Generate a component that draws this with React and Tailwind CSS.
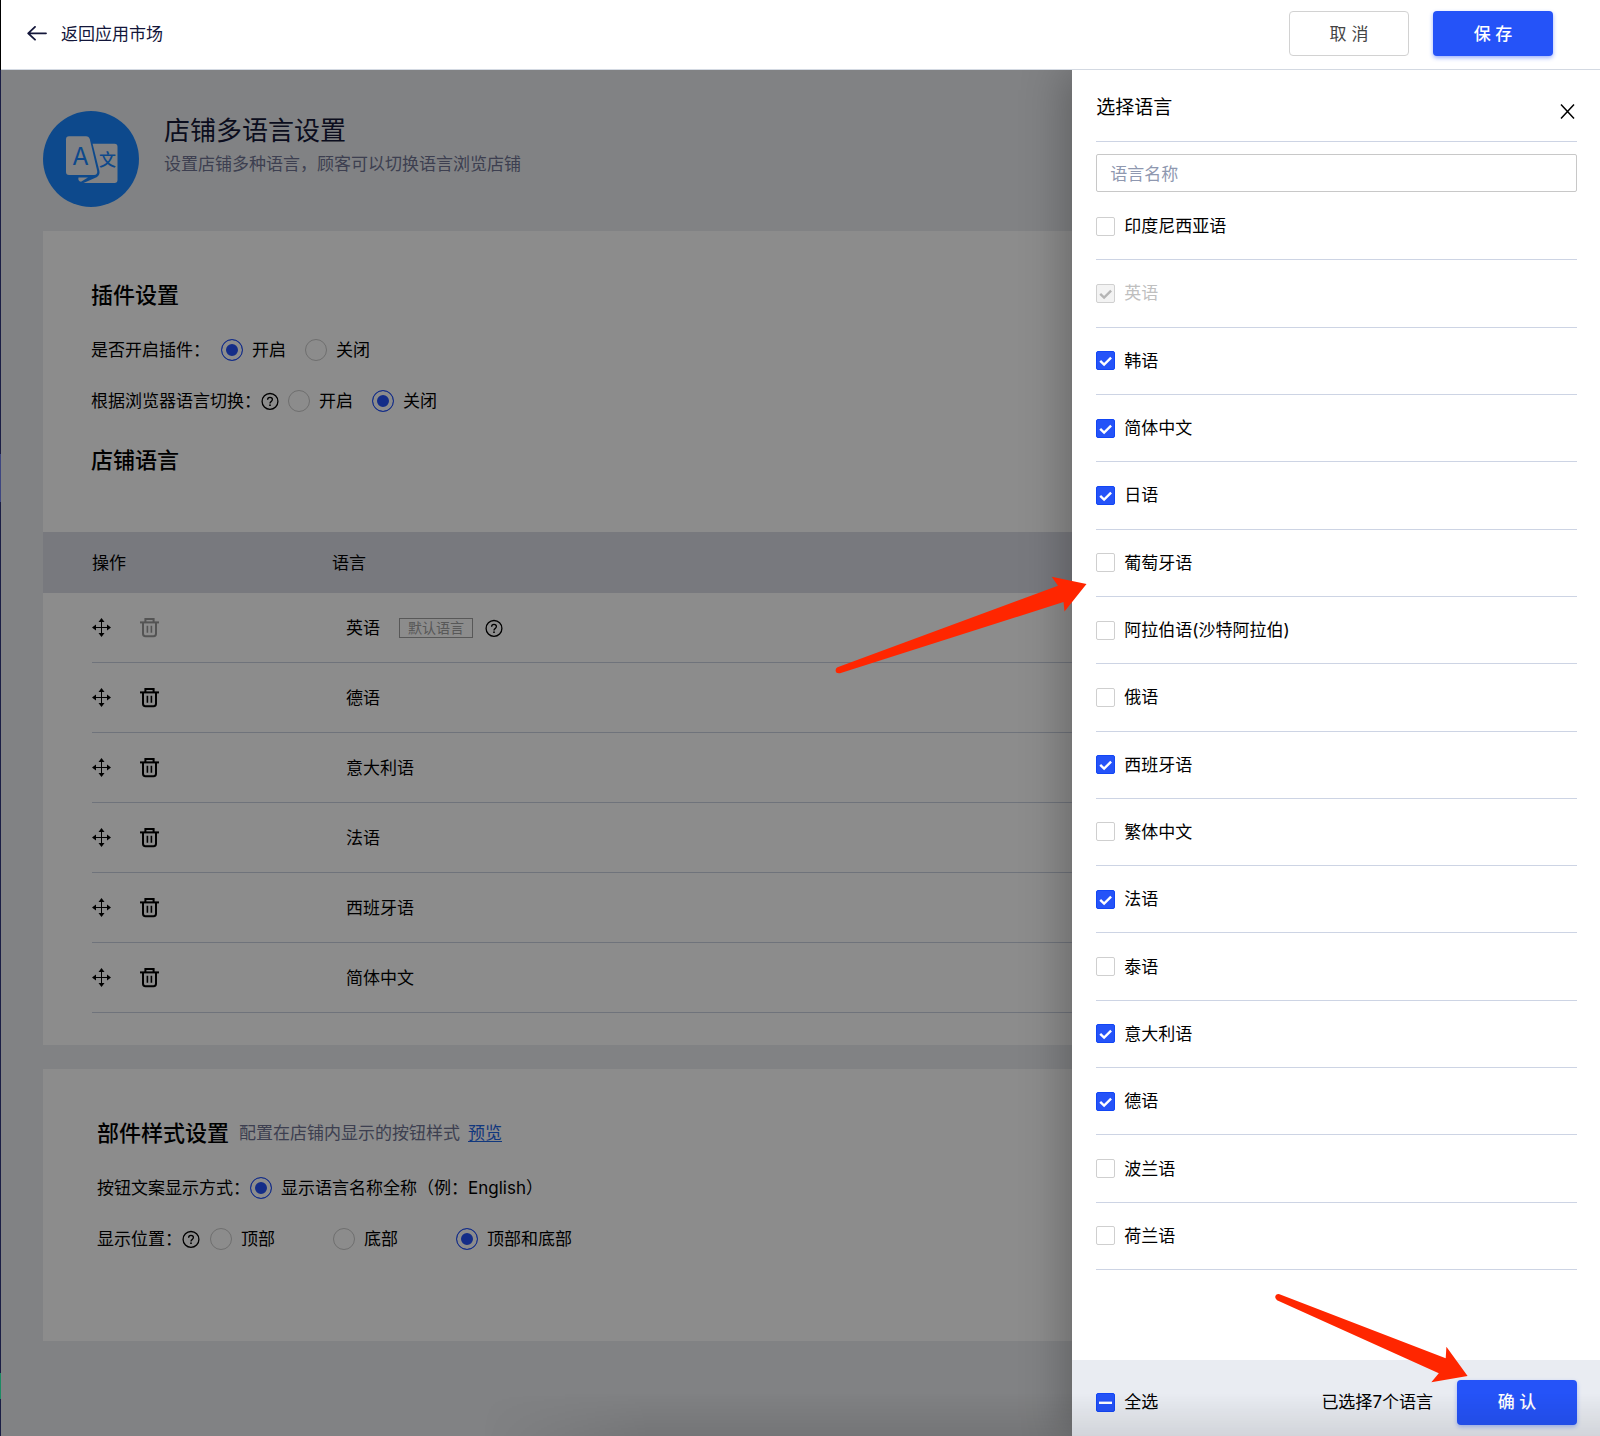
import { useState } from "react";
import clsx from "clsx";

const LANGUAGES = [
  { id: "id", name: "印度尼西亚语" },
  { id: "en", name: "英语", locked: true },
  { id: "ko", name: "韩语" },
  { id: "zh-cn", name: "简体中文" },
  { id: "ja", name: "日语" },
  { id: "pt", name: "葡萄牙语" },
  { id: "ar", name: "阿拉伯语(沙特阿拉伯)" },
  { id: "ru", name: "俄语" },
  { id: "es", name: "西班牙语" },
  { id: "zh-tw", name: "繁体中文" },
  { id: "fr", name: "法语" },
  { id: "th", name: "泰语" },
  { id: "it", name: "意大利语" },
  { id: "de", name: "德语" },
  { id: "pl", name: "波兰语" },
  { id: "nl", name: "荷兰语" },
];

const SHOP_LANGUAGES = [
  { name: "英语", isDefault: true },
  { name: "德语" },
  { name: "意大利语" },
  { name: "法语" },
  { name: "西班牙语" },
  { name: "简体中文" },
];

const BackIcon = () => (
  <svg width="20" height="16" viewBox="0 0 20 16" fill="none" stroke="currentColor" strokeWidth="1.8" strokeLinecap="round" strokeLinejoin="round">
    <path d="M8 .9 1.2 7.3 8 13.7M1.5 7.3H19" />
  </svg>
);

const HelpIcon = () => (
  <svg className="shrink-0" width="18" height="18" viewBox="0 0 18 18" fill="none" stroke="currentColor" strokeWidth="1.3">
    <circle cx="9" cy="9.4" r="7.9" />
    <path d="M6.6 7.8C6.6 6.3 7.6 5.4 9 5.4s2.4.9 2.4 2.2c0 1-.6 1.5-1.3 2-.7.5-1.1.9-1.1 1.8" />
    <circle cx="9" cy="13.2" r="0.9" fill="currentColor" stroke="none" />
  </svg>
);

const MoveIcon = () => (
  <svg width="19" height="19" viewBox="0 0 19 19" fill="currentColor">
    <path d="M9 3h1v13H9z" />
    <path d="M3 9h13v1H3z" />
    <path d="M9.5 0 12.5 4H6.5zM9.5 19l-3-4h6zM0 9.5l4-3v6zM19 9.5l-4 3v-6z" />
  </svg>
);

const TrashIcon = () => (
  <svg width="19" height="20" viewBox="0 0 19 20" fill="none" stroke="currentColor" strokeWidth="2">
    <path d="M0 4.4h19" />
    <path d="M5.4 4.4V1h8.2v3.4" />
    <path d="M3 4.4v11.4q0 2.4 2.4 2.4h8.2q2.4 0 2.4-2.4V4.4" />
    <path d="M7.4 7.8v7M11.4 7.8v7" strokeWidth="1.6" />
  </svg>
);

const AppLogo = () => (
  <svg className="shrink-0" width="96" height="96" viewBox="0 0 96 96">
    <circle cx="48" cy="48" r="48" fill="#1986ff" />
    <g fill="#ebedf1">
      <path d="M26 25.3H43Q46 25.3 46.8 28.3L54.2 60Q54.6 64 51 64H26Q23 64 23 61V28.3Q23 25.3 26 25.3Z" />
      <path d="M49.6 32.7H71.5Q74.5 32.7 74.5 35.7V69Q74.5 72 71.5 72H40.5L53.6 66.2Q57.2 64 56.4 60Z" />
      <path d="M35.5 66.5H45L38 70.8Q34.6 70 35.5 66.5Z" />
    </g>
    <g fill="#1986ff" fontFamily="Inter, 'Noto Sans CJK SC', sans-serif">
      <text x="37.5" y="53.5" fontSize="24" textAnchor="middle">A</text>
      <text x="64.5" y="55" fontSize="17" fontWeight="500" textAnchor="middle">文</text>
    </g>
  </svg>
);

const Radio = ({ name, label, checked, onChange }) => (
  <label className="flex items-center gap-[9px]">
    <input
      type="radio"
      name={name}
      checked={checked}
      onChange={onChange}
      className="size-[22px] shrink-0 appearance-none rounded-full border border-[#c9c9c9] bg-white checked:border-[#2553f8] checked:bg-[#2553f8] checked:shadow-[inset_0_0_0_4px_white]"
    />
    {label}
  </label>
);

const Checkbox = ({ label, checked, partial, disabled, onChange }) => (
  <label className={clsx("flex items-center gap-[9px]", disabled && "text-[#bfbfbf]")}>
    <span className="grid shrink-0 place-items-center">
      <input
        type="checkbox"
        checked={checked}
        disabled={disabled}
        onChange={onChange}
        className={clsx(
          "col-start-1 row-start-1 size-[19px] appearance-none rounded-xs border",
          disabled
            ? "border-[#d0d0d0] bg-[#f3f3f3]"
            : checked || partial
              ? "border-[#1246f5] bg-[#2553f8]"
              : "border-[#cfcfcf] bg-white"
        )}
      />
      {(checked || partial) && (
        <svg
          className={clsx(
            "pointer-events-none col-start-1 row-start-1",
            disabled ? "text-[#b5b5b5]" : "text-white"
          )}
          width="19"
          height="19"
          viewBox="0 0 19 19"
          fill="none"
          stroke="currentColor"
          strokeWidth="2.4"
        >
          <path d={partial ? "M3 9.8h13" : "M4.2 9.8l3.9 3.8 7-7"} />
        </svg>
      )}
    </span>
    {label}
  </label>
);

const SettingsPage = () => {
  const [enabled, setEnabled] = useState("on");
  const [followBrowser, setFollowBrowser] = useState("off");
  const [position, setPosition] = useState("both");

  return (
    <main className="px-[42px] pt-[41px] pb-24">
      <div className="mb-6 flex gap-[25px]">
        <AppLogo />
        <div>
          <h1 className="text-[26px] leading-[39px] text-[#151838]">店铺多语言设置</h1>
          <p className="leading-7 text-[#6f7492]">设置店铺多种语言，顾客可以切换语言浏览店铺</p>
        </div>
      </div>

      <section className="mb-6 bg-white pt-[49px] pb-8">
        <div className="px-12">
          <h2 className="mb-[29px] text-[22px] leading-[30px] font-medium">插件设置</h2>
          <div className="mb-[29px] flex h-[22px] items-center">
            <span className="mr-[11px]">是否开启插件：</span>
            <div className="flex gap-[19px]">
              <Radio name="enabled" label="开启" checked={enabled === "on"} onChange={() => setEnabled("on")} />
              <Radio name="enabled" label="关闭" checked={enabled === "off"} onChange={() => setEnabled("off")} />
            </div>
          </div>
          <div className="mb-[33px] flex h-[22px] items-center">
            <span>根据浏览器语言切换：</span>
            <HelpIcon />
            <div className="ml-[9px] flex gap-[19px]">
              <Radio name="browser" label="开启" checked={followBrowser === "on"} onChange={() => setFollowBrowser("on")} />
              <Radio name="browser" label="关闭" checked={followBrowser === "off"} onChange={() => setFollowBrowser("off")} />
            </div>
          </div>
          <h2 className="mb-[57px] text-[22px] leading-[30px] font-medium">店铺语言</h2>
        </div>

        <table className="w-full table-fixed border-collapse text-left">
          <thead className="bg-[#dadce6]">
            <tr className="h-[61px]">
              <th className="w-[289px] pl-[49px] font-normal">操作</th>
              <th className="font-normal">语言</th>
            </tr>
          </thead>
          <tbody>
            {SHOP_LANGUAGES.map((lang) => (
              <tr key={lang.name}>
                <td className="p-0 pl-[49px]">
                  <div className="flex h-[70px] items-center gap-[29px] border-b border-[#cbd1e0]">
                    <button type="button" aria-label="拖动排序">
                      <MoveIcon />
                    </button>
                    <button
                      type="button"
                      aria-label="删除"
                      disabled={lang.isDefault}
                      className="disabled:text-[#999]"
                    >
                      <TrashIcon />
                    </button>
                  </div>
                </td>
                <td className="p-0 pr-12">
                  <div className="flex h-[70px] items-center border-b border-[#cbd1e0] pl-3.5">
                    {lang.name}
                    {lang.isDefault && (
                      <>
                        <span className="mr-3 ml-[19px] border border-[#a0a0a0] px-2 text-sm leading-[18px] text-[#a0a0a0]">
                          默认语言
                        </span>
                        <HelpIcon />
                      </>
                    )}
                  </div>
                </td>
              </tr>
            ))}
          </tbody>
        </table>
      </section>

      <section className="bg-white px-[54px] pt-[49px] pb-[91px]">
        <div className="mb-[29px] flex items-center">
          <h2 className="mr-2.5 text-[22px] leading-[30px] font-medium">部件样式设置</h2>
          <p className="mr-2 text-[#6f7492]">配置在店铺内显示的按钮样式</p>
          <a href="#preview" className="text-[#1f66e5] underline underline-offset-2">预览</a>
        </div>
        <div className="mb-[29px] flex h-[22px] items-center">
          <span>按钮文案显示方式：</span>
          <Radio name="text-mode" label="显示语言名称全称（例：English）" checked onChange={() => {}} />
        </div>
        <div className="flex h-[22px] items-center">
          <span>显示位置：</span>
          <HelpIcon />
          <div className="ml-2.5 flex gap-[58px]">
            <Radio name="position" label="顶部" checked={position === "top"} onChange={() => setPosition("top")} />
            <Radio name="position" label="底部" checked={position === "bottom"} onChange={() => setPosition("bottom")} />
            <Radio name="position" label="顶部和底部" checked={position === "both"} onChange={() => setPosition("both")} />
          </div>
        </div>
      </section>
    </main>
  );
};

const LanguageDrawer = () => {
  const [selected, setSelected] = useState(["en", "ko", "zh-cn", "ja", "es", "fr", "it", "de"]);
  const [keyword, setKeyword] = useState("");

  const toggle = (id) =>
    setSelected((prev) => (prev.includes(id) ? prev.filter((x) => x !== id) : [...prev, id]));

  const editable = LANGUAGES.filter((l) => !l.locked);
  const count = editable.filter((l) => selected.includes(l.id)).length;
  const allSelected = count === editable.length;

  return (
    <aside className="relative flex w-[33%] flex-col bg-white shadow-[-8px_0_40px_rgba(0,0,0,0.25)]">
      <div className="flex flex-1 flex-col pr-[23px] pb-[90px] pl-6">
        <div className="flex h-[72px] items-center justify-between border-b border-[#cdd4e4] pt-1">
          <h2 className="text-[19px]">选择语言</h2>
          <button type="button" aria-label="关闭" className="pt-2 pr-0.5">
            <svg width="15" height="15" viewBox="0 0 15 15" fill="none" stroke="currentColor" strokeWidth="1.5">
              <path d="M1 .5l13 14M14 .5l-13 14" />
            </svg>
          </button>
        </div>
        <input
          type="text"
          aria-label="语言名称"
          placeholder="语言名称"
          value={keyword}
          onChange={(e) => setKeyword(e.target.value)}
          className="mt-3 h-[38px] shrink-0 rounded-xs border border-[#c8c8c8] px-[13px] pt-0.5 outline-none placeholder:text-[#8f98b0]"
        />
        <ul className="mt-px flex flex-1 flex-col">
          {LANGUAGES.filter((l) => l.name.includes(keyword)).map((lang) => (
            <li key={lang.id} className="flex flex-1 items-center border-b border-[#cdd4e4]">
              <Checkbox
                label={lang.name}
                checked={selected.includes(lang.id)}
                disabled={lang.locked}
                onChange={() => toggle(lang.id)}
              />
            </li>
          ))}
        </ul>
      </div>

      <div className="flex h-[77px] items-center bg-[#e9ecf2] pt-[7px] pr-[23px] pl-6">
        <Checkbox
          label="全选"
          checked={allSelected}
          partial={count > 0 && !allSelected}
          onChange={() => setSelected(allSelected ? ["en"] : LANGUAGES.map((l) => l.id))}
        />
        <span className="mr-6 ml-auto">已选择{count}个语言</span>
        <button
          type="button"
          className="h-[45px] w-[120px] rounded bg-[#2553f8] font-medium text-white shadow-[0_2px_4px_rgba(37,83,248,0.35)]"
        >
          确 认
        </button>
      </div>

      {/* 指引箭头 */}
      <svg className="pointer-events-none absolute top-[506px] -left-[237px]" width="252" height="98" viewBox="835 576 252 98">
        <path
          d="M837.5 667.3 1058 585.7 1051.7 576.7 1086.5 584 1064.5 611.5 1063.5 602 840 673.2Q836 673.8 835.6 670.8 835.4 668.4 837.5 667.3Z"
          fill="#ff2600"
        />
      </svg>
      <svg className="pointer-events-none absolute right-[132px] bottom-[54px]" width="194" height="90" viewBox="1274 1293 194 90">
        <path
          d="M1279.5 1294.2 1445.7 1358.3 1446.4 1346.7 1467.6 1376 1431.3 1382.2 1438.8 1373.3 1277 1300.3Q1274.6 1298.6 1275.3 1296 1276.6 1293.4 1279.5 1294.2Z"
          fill="#ff2600"
        />
      </svg>
    </aside>
  );
};

export default function App() {
  return (
    <div className="flex min-h-screen bg-[#ebedf1] font-['Inter','Noto_Sans_CJK_SC',sans-serif] text-[17px] leading-6 text-black">
      {/* 左侧菜单露出的边缘 */}
      <div className="flex w-px shrink-0 flex-col bg-[#1b1e45]">
        <div className="h-[70px] bg-black" />
        <div className="mt-[384px] h-[48px] bg-[#3e4680]" />
        <div className="mt-auto mb-[38px] h-[26px] bg-[#1c8a63]" />
      </div>

      <div className="flex min-w-0 flex-1 flex-col">
        <header className="flex h-[70px] shrink-0 items-center border-b border-[#d3d9e2] bg-white pr-[47px] pb-0.5 pl-[26px]">
          <a href="#market" className="flex items-center gap-3.5 text-[#13163a]">
            <BackIcon />
            返回应用市场
          </a>
          <div className="ml-auto flex gap-6">
            <button
              type="button"
              className="h-[45px] w-[120px] rounded border border-[#d2d2d2] bg-white text-[#444]"
            >
              取 消
            </button>
            <button
              type="button"
              className="h-[45px] w-[120px] rounded bg-[#2553f8] font-medium text-white shadow-[0_2px_4px_rgba(37,83,248,0.45)]"
            >
              保 存
            </button>
          </div>
        </header>

        <div className="relative flex-1 overflow-hidden">
          <SettingsPage />
          <div className="absolute inset-0 flex justify-end bg-black/45">
            <LanguageDrawer />
          </div>
          <div className="pointer-events-none absolute right-0 bottom-0 left-[30%] h-11 bg-linear-to-t from-black/10 to-transparent mask-l-from-85% mask-l-to-100%" />
        </div>
      </div>
    </div>
  );
}
